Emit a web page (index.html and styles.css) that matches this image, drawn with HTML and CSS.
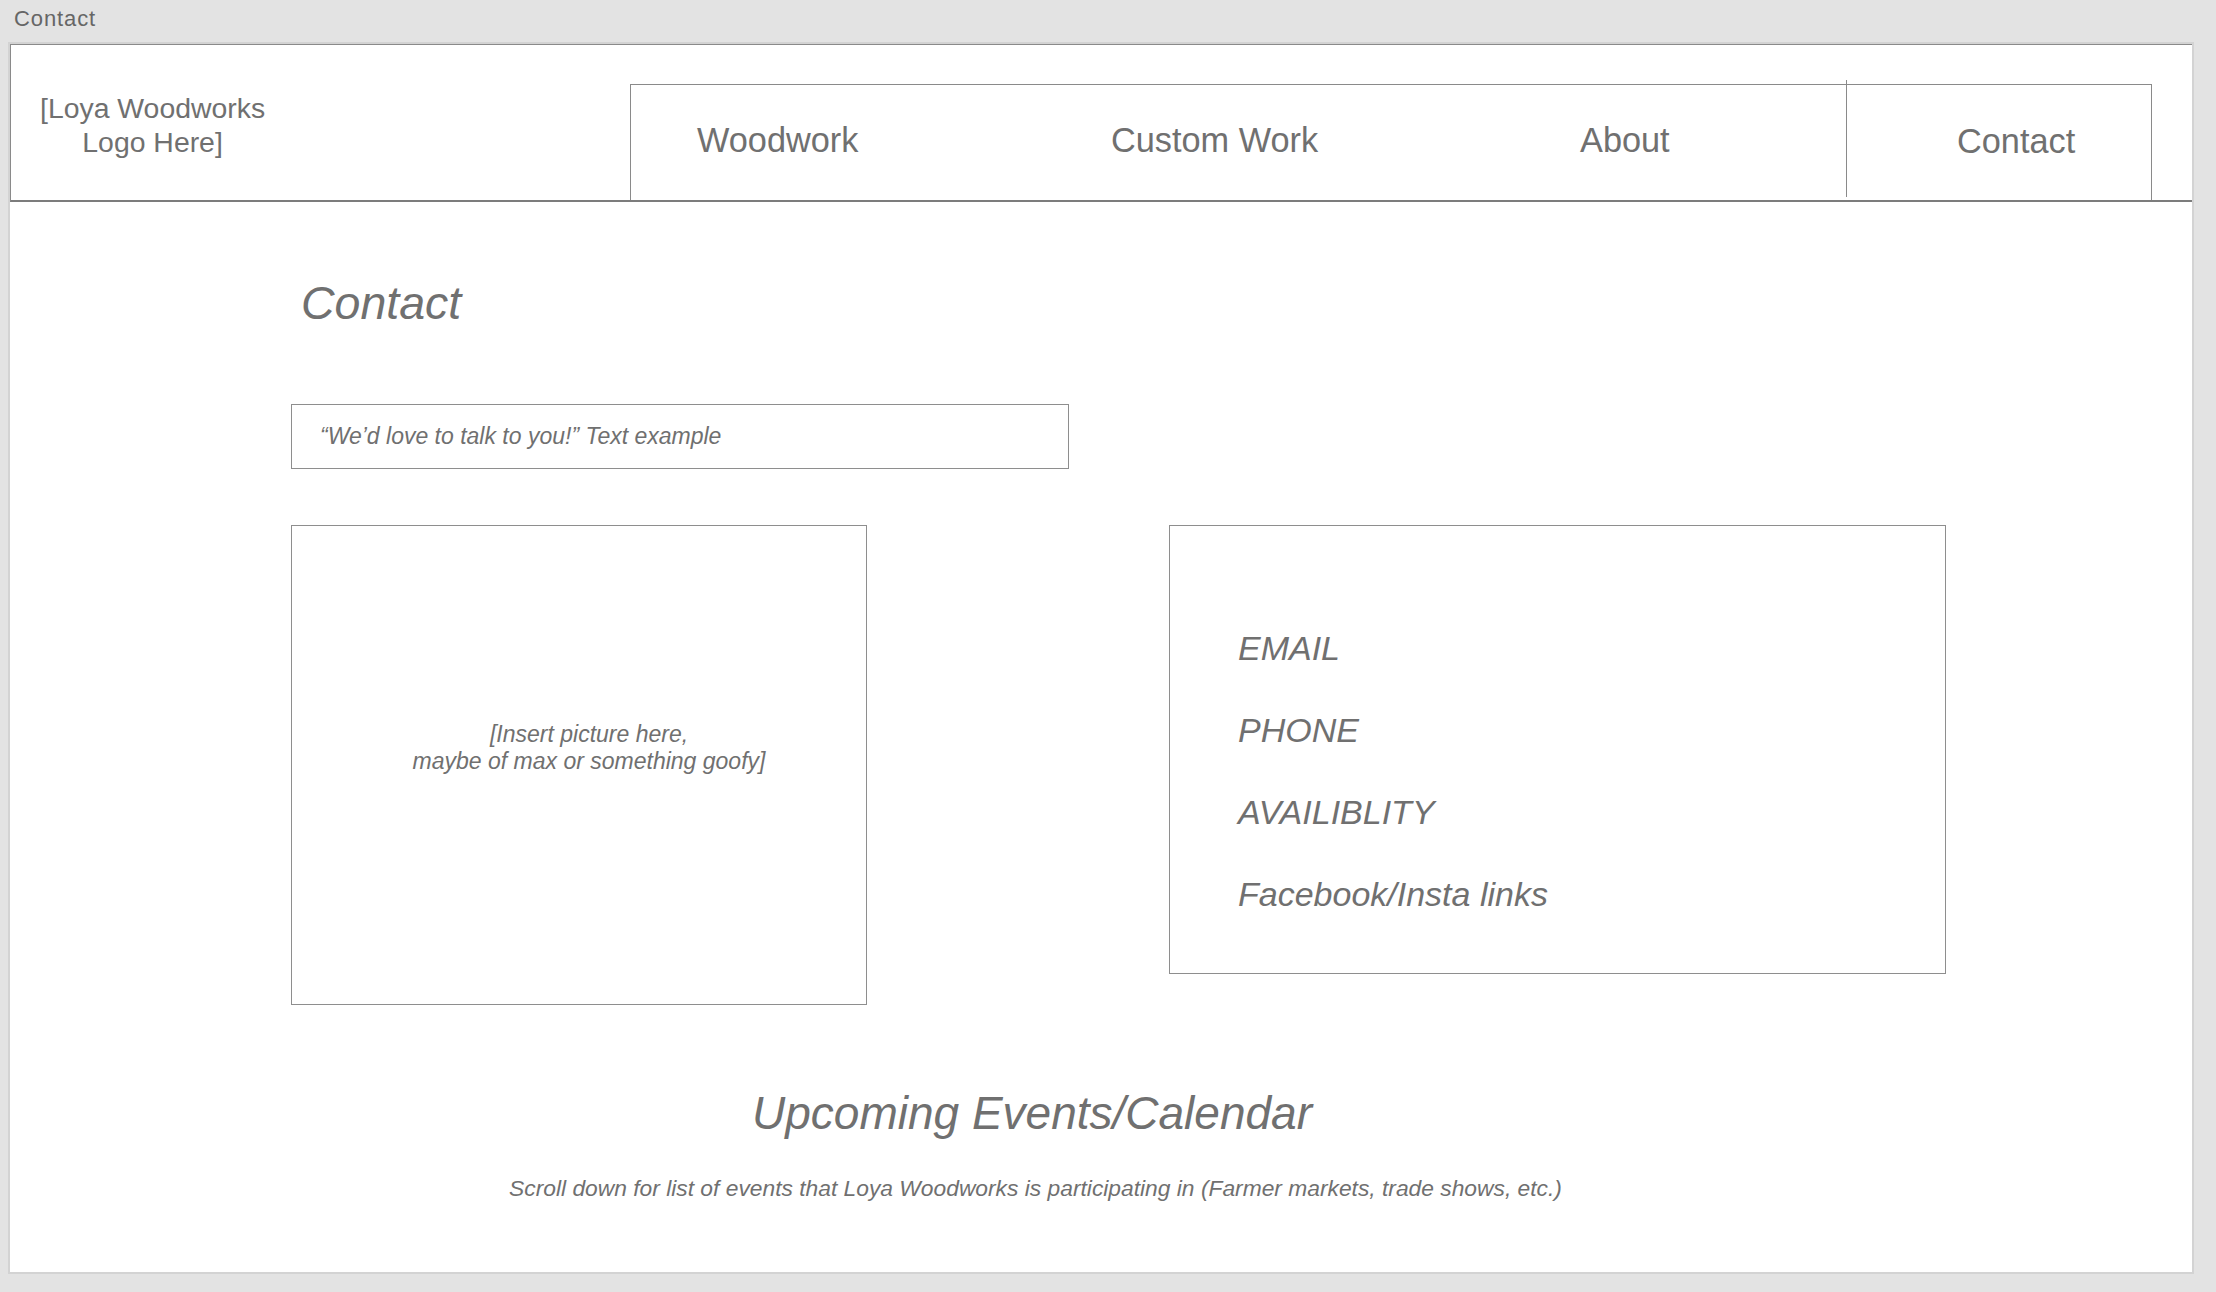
FILE: index.html
```html
<!DOCTYPE html>
<html lang="en">
<head>
<meta charset="utf-8">
<title>Contact</title>
<link rel="stylesheet" href="styles.css">
</head>
<body>
<div class="window-title">Contact</div>
<div class="artboard">
  <header class="header">
    <div class="logo"><div class="logo-text">[Loya Woodworks<br>Logo Here]</div></div>
    <nav class="nav">
      <a class="nav-item nav-woodwork">Woodwork</a>
      <a class="nav-item nav-custom">Custom Work</a>
      <a class="nav-item nav-about">About</a>
      <a class="nav-item nav-contact">Contact</a>
    </nav>
  </header>
  <main class="main">
    <h1 class="page-title">Contact</h1>
    <div class="quote-box">“We’d love to talk to you!” Text example</div>
    <div class="content-row">
      <div class="picture-box"><p class="picture-text">[Insert picture here,<br>maybe of max or something goofy]</p></div>
      <ul class="info-box">
        <li>EMAIL</li>
        <li>PHONE</li>
        <li>AVAILIBLITY</li>
        <li>Facebook/Insta links</li>
      </ul>
    </div>
    <section class="events">
      <h2 class="events-title">Upcoming Events/Calendar</h2>
      <p class="events-text">Scroll down for list of events that Loya Woodworks is participating in (Farmer markets, trade shows, etc.)</p>
    </section>
  </main>
</div>
</body>
</html>
```
FILE: styles.css
```css
* { box-sizing: border-box; }

html, body {
  margin: 0;
  padding: 0;
}

body {
  width: 2216px;
  height: 1292px;
  overflow: hidden;
  background: #e3e3e3;
  font-family: "Liberation Sans", Arial, Helvetica, sans-serif;
  color: #707070;
}

.window-title {
  height: 42px;
  padding-left: 14px;
  font-size: 22px;
  line-height: 37px;
  letter-spacing: 0.9px;
  color: #666;
}

.artboard {
  margin-left: 8px;
  width: 2186px;
  height: 1232px;
  border: 2px solid #d3d3d3;
  background: #fff;
}

/* Header */
.header {
  display: flex;
  align-items: flex-end;
  height: 158px;
  border-top: 1px solid #8a8a8a;
  border-left: 1px solid #8a8a8a;
  border-bottom: 2px solid #7c7c7c;
}

.logo {
  flex: 0 0 619px;
  align-self: stretch;
  display: flex;
  align-items: center;
  padding-left: 29px;
  padding-top: 4px;
}

.logo-text {
  text-align: center;
  font-size: 28.4px;
  line-height: 34px;
}

.nav {
  flex: 0 0 1522px;
  height: 116px;
  display: flex;
  border: 1px solid #8a8a8a;
  border-bottom: none;
}

.nav-item {
  display: flex;
  align-items: center;
  font-size: 34.3px;
  line-height: 34px;
  color: #707070;
  padding-bottom: 5px;
  white-space: nowrap;
}

.nav-woodwork { flex: 0 0 480px; padding-left: 66px; }
.nav-custom { flex: 0 0 469px; }
.nav-about { flex: 0 0 266px; }
.nav-contact {
  flex: 1 1 auto;
  margin-top: -5px;
  margin-bottom: 3px;
  padding-top: 4px;
  padding-bottom: 0;
  padding-left: 110px;
  border-left: 1px solid #8a8a8a;
}

/* Main */
.main {
  padding: 78px 0 0 281px;
}

.page-title {
  margin: 0 0 78px 10px;
  font-size: 46.5px;
  line-height: 46px;
  font-style: italic;
  font-weight: normal;
}

.quote-box {
  width: 778px;
  height: 65px;
  border: 1px solid #8e8e8e;
  display: flex;
  align-items: center;
  padding-left: 28px;
  font-size: 23px;
  font-style: italic;
}

.content-row {
  display: flex;
  align-items: flex-start;
  gap: 302px;
  margin-top: 56px;
}

.picture-box {
  flex: 0 0 576px;
  height: 480px;
  border: 1px solid #8e8e8e;
  display: flex;
  align-items: center;
  justify-content: center;
  padding-left: 20px;
  padding-bottom: 35px;
}

.picture-text {
  margin: 0;
  text-align: center;
  font-size: 23px;
  line-height: 27px;
  font-style: italic;
}

.info-box {
  flex: 0 0 777px;
  height: 449px;
  margin: 0;
  padding: 81px 0 0 68px;
  list-style: none;
  border: 1px solid #8e8e8e;
}

.info-box li {
  font-size: 34px;
  line-height: 82px;
  font-style: italic;
}

.events {
  width: 1482px;
  margin-top: 85px;
  text-align: center;
}

.events-title {
  margin: 0;
  font-size: 46px;
  line-height: 46px;
  font-style: italic;
  font-weight: normal;
}

.events-text {
  margin: 41px 0 0;
  padding-left: 7px;
  font-size: 22.8px;
  line-height: 23px;
  font-style: italic;
}
```
